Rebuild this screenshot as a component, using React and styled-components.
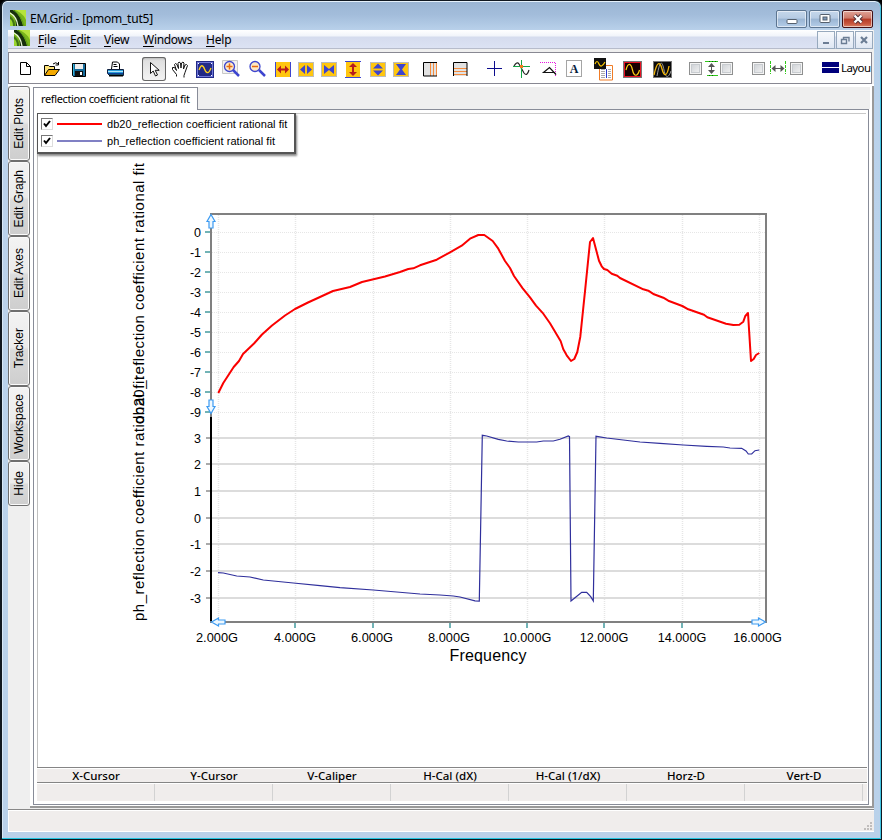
import React from "react";
import styled, { createGlobalStyle } from "styled-components";

const Global = createGlobalStyle`
  * { box-sizing: border-box; }
  html, body { margin: 0; background: #000; }
  body { width: 882px; height: 840px; overflow: hidden; font-family: "Noto Sans", "Open Sans", sans-serif; color: #000; }
  svg { display: block; flex: none; }
`;

const Window = styled.div`
  width: 882px;
  height: 840px;
  display: flex;
  flex-direction: column;
  border: 1px solid #101820;
  border-left-width: 2px;
  border-radius: 7px 7px 0 0;
  background: linear-gradient(#9ab5d3 0, #a3bddb 14px, #bad2eb 30px, #b9d1ea 100%);
  box-shadow: inset 0 1px #e5f1fb, inset -1px 0 #3fc4e2, inset 0 -1px #22c4e0, inset 1px 0 #d8e8f6;
  padding: 0 7px 7px 6px;
`;
const TitleBar = styled.header`
  display: flex;
  height: 29px;
  flex: none;
  padding: 9px 1px 0 2px;
`;
const Title = styled.div`
  flex: 1;
  font-size: 12px;
  line-height: 18px;
  margin-left: 4px;
  letter-spacing: ${(p) => p.$track || 0}px;
`;
const WindowButtons = styled.div`
  display: flex;
  gap: 2px;
`;
const WindowButton = styled.button`
  width: 31px;
  height: 18px;
  padding: 0;
  border: 1px solid ${(p) => (p.$danger ? "#431016" : "#5c7591")};
  border-radius: 2px;
  display: flex;
  align-items: center;
  justify-content: center;
  box-shadow: inset 0 0 0 1px rgba(255, 255, 255, 0.55);
  background: ${(p) =>
    p.$danger
      ? "linear-gradient(#e0a397 0, #cd7868 45%, #b43a26 50%, #c8573f 80%, #d98368 100%)"
      : "linear-gradient(#c5d7eb 0, #b6cbe3 45%, #9ab5d3 50%, #b4cde8 100%)"};
`;
const MenuBar = styled.nav`
  display: flex;
  flex: none;
  height: 19px;
  padding-left: 6px;
  width: 865px;
  background: linear-gradient(#fff 0, #f1f4fa 6px, #d5dcee 7px, #dce2f3 18px, #b7bccb 18px);
`;
const MenuItem = styled.span`
  font-size: 12px;
  line-height: 19px;
  width: ${(p) => p.$w}px;
  margin-left: ${(p) => p.$gap}px;
  letter-spacing: ${(p) => p.$track || 0}px;
  white-space: nowrap;
  u { text-underline-offset: 2px; text-decoration-thickness: 1px; }
`;
const MdiButtons = styled.div`
  display: flex;
  margin-left: auto;
  gap: 1px;
`;
const MdiButton = styled.button`
  width: 18px;
  height: 18px;
  margin-top: 1px;
  padding: 0;
  display: flex;
  align-items: center;
  justify-content: center;
  background: linear-gradient(#f7f9fc, #dfe7f3);
  border: 1px solid #97a9bd;
`;
const Client = styled.div`
  flex: 1;
  min-height: 0;
  display: flex;
  flex-direction: column;
  background: #efefef;
  width: 866px;
`;
const Toolbar = styled.div`
  height: 32px;
  width: 864px;
  flex: none;
  margin-top: 3px;
  border: 1px solid #888892;
  background: #fff;
  display: flex;
  padding-top: 4px;
`;
const Tool = styled.div`
  width: 24px;
  height: 24px;
  flex: none;
  margin-left: ${(p) => p.$gap}px;
  border-radius: 3px;
  background: ${(p) => (p.$active ? "linear-gradient(#dcdcdc,#f4f4f4)" : "none")};
  box-shadow: ${(p) => (p.$active ? "inset 0 0 0 1px #666, inset 0 2px 2px #bbb" : "none")};
`;
const ToolCheck = styled.span`
  width: 13px;
  height: 13px;
  flex: none;
  margin-top: 5px;
  margin-left: ${(p) => p.$gap}px;
  border: 1px solid #8e8f8f;
  background: linear-gradient(135deg, #c9cdd2, #f6f6f6);
  box-shadow: inset 0 0 0 1px #f4f4f4, inset 0 0 0 2px #c8ccd0;
`;
const ToolLabel = styled.span`
  font-size: 11.5px;
  line-height: 22px;
  margin-left: -2px;
  white-space: nowrap;
  letter-spacing: -0.6px;
`;
const Workspace = styled.div`
  flex: 1;
  min-height: 0;
  display: flex;
  border-top: 2px solid #fff;
`;
const SideTabs = styled.div`
  width: 22px;
  flex: none;
`;
const SideTab = styled.button`
  width: 22px;
  height: ${(p) => p.$h}px;
  display: flex;
  align-items: center;
  justify-content: center;
  padding: 0;
  border: 1px solid #6f6f6f;
  border-radius: 3px;
  box-shadow: inset 0 0 0 1px #fafafa;
  background: linear-gradient(#f3f3f3 0, #ebebeb 48%, #dbdbdb 52%, #cecece 100%);
  span {
    font: 12px "Liberation Sans", sans-serif;
    writing-mode: vertical-rl;
    transform: rotate(180deg);
    letter-spacing: ${(p) => p.$track || 0}px;
    white-space: nowrap;
  }
`;
const Document = styled.div`
  width: 844px;
  display: flex;
  flex-direction: column;
  border: solid #999;
  border-width: 0 2px 2px 0;
  background: #fff;
  padding: 1px 2px 1px 3px;
  margin-bottom: 1px;
`;
const TabStrip = styled.div`
  display: flex;
  height: 22px;
  flex: none;
  background: #efefef;
`;
const Tab = styled.div`
  width: 165px;
  height: 23px;
  border: 1px solid #888c98;
  border-bottom: 0;
  background: #fff;
  font-size: 11px;
  line-height: 21px;
  padding-left: 7px;
  letter-spacing: ${(p) => p.$track}px;
  white-space: nowrap;
  z-index: 1;
`;
const Pane = styled.div`
  flex: 1;
  min-height: 0;
  display: flex;
  flex-direction: column;
  width: 836px;
  border: 1px solid #888c98;
  padding: 3px 1px 2px 3px;
`;
const Canvas = styled.div`
  position: relative;
  height: 654px;
  flex: none;
  border-top: 1px solid #c8c8c8;
  border-left: 1px solid #c0c0c0;
  margin-right: 1px;
`;
const Legend = styled.div`
  position: absolute;
  left: -1px;
  top: -1px;
  width: 259px;
  height: 41px;
  padding: 1px 0 0 3px;
  background: #fff;
  border: 1px solid #555;
  border-width: 1px 2px 2px 1px;
  box-shadow: 1px 2px 2px #888;
`;
const LegendRow = styled.div`
  display: flex;
  align-items: center;
  height: 17px;
  font: 11px "Liberation Sans", sans-serif;
  letter-spacing: ${(p) => p.$track}px;
  white-space: nowrap;
`;
const Check = styled.span`
  width: 12px;
  height: 12px;
  border: 1px solid #777;
  border-right-color: #ddd;
  border-bottom-color: #ddd;
  margin-right: 4px;
`;
const Swatch = styled.span`
  width: 45px;
  height: 2px;
  background: ${(p) => p.$color};
  margin-right: 5px;
`;
const ReadoutHead = styled.div`
  height: 16px;
  display: flex;
  flex: none;
  background: #f0edec;
  border-top: 1px solid #858585;
  border-bottom: 1px solid #858585;
  box-shadow: inset 0 1px #fff;
  span {
    width: 118px;
    text-align: center;
    font-size: 11.5px;
    font-weight: 500;
    line-height: 15px;
    letter-spacing: 0;
  }
`;
const ReadoutRow = styled.div`
  height: 18px;
  display: flex;
  flex: none;
  background: #f0edec;
  border-top: 1px solid #fff;
  span { width: 118px; border-right: 1px solid #d2d2d2; }
`;
const StatusBar = styled.footer`
  height: 23px;
  flex: none;
  width: 866px;
  display: flex;
  align-items: flex-end;
  justify-content: flex-end;
  background: #f0edec;
  border-top: 1px solid #888;
  border-bottom: 1px solid #fff;
  box-shadow: inset 0 1px #fff, inset 1px 0 #fff;
`;

const Logo = () => (
  <svg width="16" height="16" viewBox="0 0 16 16">
    <rect width="16" height="16" fill="#79b51b" />
    <path d="M5 0h11v10C14 5 10 2 5 0" fill="#b5e33c" />
    <path d="M4 0c4 4 7 8 9 16H6C6 9 4 5 0 2V0z" fill="#16300d" />
    <path d="M0 3c4 2 7 6 8 13" fill="none" stroke="#e8f7d0" strokeWidth="1.3" />
    <path d="M3 0c5 3 9 8 11 16" fill="none" stroke="#5b9b18" />
    <path d="M0 6c3 2 5 5 5 10H0" fill="#3f7513" />
    <path d="M0 9c2 1 3 4 3 7H0" fill="#9ad52f" />
  </svg>
);

const Gold = ({ children }) => (
  <>
    <rect x="4.5" y="5.5" width="15" height="14" fill="#ffc60f" stroke="#bcbcbc" />
    {children}
  </>
);
const blue = "#3d45cf";
const icons = {
  page: <path d="M6.500 5.500h6l4 4v8h-10zM12.500 5.500v4h4" fill="#fff" stroke="#000" />,
  open: (
    <>
      <path d="M4.500 18.500v-10h4l1 1h5v3" fill="#ffe47a" stroke="#000" />
      <path d="M4.500 18.500l4-6h11l-4.500 6z" fill="#f3a900" stroke="#000" />
      <path d="M13 7q3-2.500 5 0M18.500 5v3h-3" fill="none" stroke="#000" />
    </>
  ),
  save: (
    <>
      <path d="M5.500 6.500h13v13h-12l-1-1z" fill="#166c9c" stroke="#000" />
      <path d="M8 7h8v5H8z" fill="#eee" />
      <path d="M8 14h8v5H8z" fill="#111" />
      <path d="M13 15h2v3h-2z" fill="#fff" />
      <path d="M6.500 7v11" stroke="#37b4d8" />
    </>
  ),
  print: (
    <>
      <path d="M7.500 12l1-7h5l2 2v5" fill="#fff" stroke="#000" />
      <path d="M9.500 7.500h3M9.500 9.500h4" stroke="#000" />
      <path d="M3.500 12.500h16v6h-14l-2-2z" fill="#2a9ed8" stroke="#102040" />
      <path d="M4 14.500h15" stroke="#b5e4f8" />
      <path d="M4 16.500h15" stroke="#0b3f9c" />
      <path d="M5 18.500h14" stroke="#000" strokeWidth="2" />
    </>
  ),
  pointer: <path d="M8.500 5.500v11l2.700-2.500 2.300 5 2-1-2.300-4.700h4z" fill="#fff" stroke="#111" />,
  hand: (
    <path d="M8.500 19.500v-2l-4-5 0-2h2l2 3-2-6 1-1 1.500 1 1.500 4-.5-5 1-1.500 1.500 1 .5 5 .5-5 1.500-1 1 1-.5 6 1.500-4 1.500-.5 1 1-2.500 7-1 3v2" fill="#fff" stroke="#111" />
  ),
  sine: (
    <>
      <rect x="3" y="4" width="18" height="17" fill="#222a86" />
      <rect x="4.500" y="5.500" width="15" height="14" fill="none" stroke="#6f77d9" />
      <path d="M6 13c2-6 4-5 5.500-1s4 6 6.500-1" fill="none" stroke="#ffd21c" strokeWidth="1.300" />
      <path d="M5 6h1v1H5zM18 6h1v1h-1zM5 18h1v1H5zM18 18h1v1h-1z" fill="#fff" />
    </>
  ),
  zoomIn: (
    <>
      <path d="M3.500 3.500h15v13h-15z" fill="#f2f2f2" stroke="#c8c8c8" />
      <path d="M14 13l6 6" stroke={blue} strokeWidth="2.500" />
      <circle cx="10.500" cy="9.500" r="5" fill="#ffe9c4" stroke={blue} strokeWidth="1.300" />
      <path d="M7.500 9.500h6M10.500 6.500v6" stroke="#e66a10" strokeWidth="1.500" />
    </>
  ),
  zoomOut: (
    <>
      <path d="M14 13l6 6" stroke={blue} strokeWidth="2.500" />
      <circle cx="10" cy="9.500" r="5" fill="#ffe9c4" stroke={blue} strokeWidth="1.300" />
      <path d="M7 9.500h6" stroke="#e66a10" strokeWidth="1.500" />
    </>
  ),
  expandX: (
    <>
      <path d="M4 5h16v15H4z" fill="#ffc60f" />
      <path d="M4.500 5v15M19.500 5v15" stroke={blue} />
      <path d="M6 12.500l4-4v3h4v-3l4 4-4 4v-3h-4v3z" fill="#b71c1c" />
    </>
  ),
  outX: <Gold><path d="M11 8v9l-5-4.500zM13 8v9l5-4.500z" fill={blue} /></Gold>,
  inX: <Gold><path d="M7 8v9l5-4 5 4V8l-5 4z" fill={blue} /></Gold>,
  expandY: (
    <>
      <path d="M5 4h14v17H5z" fill="#ffc60f" />
      <path d="M4 4.500h16M4 20.500h16" stroke={blue} />
      <path d="M12 6l4 4h-3v5h3l-4 4-4-4h3v-5H8z" fill="#b71c1c" />
    </>
  ),
  outY: <Gold><path d="M7 11.500h10l-5-5zM7 13.500h10l-5 5z" fill={blue} /></Gold>,
  inY: <Gold><path d="M7 7h10l-4 5.500 4 5.500H7l4-5.500z" fill={blue} /></Gold>,
  gridV: (
    <>
      <path d="M5 6h13v13H5z" fill="#e2e2e2" />
      <path d="M11.500 6v13M14.500 6v13M17.500 6v13" stroke="#f58b3c" />
      <path d="M18 5.500H4.500v13.500H18" fill="none" stroke="#000" />
    </>
  ),
  gridH: (
    <>
      <path d="M5 6h13v13H5z" fill="#e2e2e2" />
      <path d="M5 11.500h13M5 14.500h13M5 17.500h13" stroke="#f58b3c" />
      <path d="M4.500 19V5.500h13.500V19" fill="none" stroke="#000" />
    </>
  ),
  cross: <path d="M4 11.500h15M11.500 4v15" stroke="#0b0b8c" />,
  track: (
    <>
      <path d="M4 9q3-5 5-2l5 9q3 4 5-3" fill="none" stroke="#222" strokeWidth="1.200" />
      <path d="M3 9.500h17M11.500 3v18" stroke="#14a546" />
      <rect x="10" y="8" width="3" height="3" fill="#f07b1b" />
    </>
  ),
  delta: (
    <>
      <path d="M3 5.500h15.500V19" fill="none" stroke="#e815e0" strokeDasharray="1 1" />
      <path d="M6.500 15.500h11l1.500 2-6.500-7z" fill="#fff" stroke="#111" strokeWidth="1.200" />
    </>
  ),
  letter: (
    <>
      <rect x="3.500" y="3.500" width="15" height="16" fill="#fff" stroke="#a5a5a5" />
      <text x="11" y="16" textAnchor="middle" fontFamily="Liberation Serif, serif" fontSize="12" fontWeight="bold" fill="#061b3c">A</text>
    </>
  ),
  report: (
    <>
      <path d="M7.500 8.500h13v14.500h-13z" fill="#fff" stroke="#f07c26" />
      <path d="M9 12.500h4M9 14.500h4M9 16.500h4M9 18.500h4M9 20.500h4M16 12.500h3M16 14.500h3M16 16.500h3M16 18.500h3M16 20.500h3" stroke="#aaa" />
      <path d="M14.500 12v9" stroke="#293bce" />
      <path d="M2 1h12v11H2z" fill="#111" />
      <path d="M3 7q2-5 4 0t6-2" fill="none" stroke="#fc0" strokeWidth="1.200" />
    </>
  ),
  redSine: (
    <>
      <rect x="2.500" y="4.500" width="18" height="16" fill="#160000" stroke="#777" />
      <rect x="3.500" y="5.500" width="16" height="14" fill="none" stroke="#e91123" />
      <path d="M5 13c2-8 5-7 6.500 0s5 7 7 0" fill="none" stroke="#ffcf12" strokeWidth="1.200" />
    </>
  ),
  twoSine: (
    <>
      <rect x="2.500" y="4.500" width="18" height="16" fill="#0a0a0a" stroke="#777" />
      <path d="M6 19c3-16 5-16 7-6s5 7 7 1" fill="none" stroke="#999" />
      <path d="M3 18C6 4 9 4 11 12s5 8 7-3" fill="none" stroke="#f3b60b" strokeWidth="1.300" />
    </>
  ),
  calY: (
    <>
      <path d="M5 4.500h13M7 18.500h11" stroke="#32c71b" />
      <path d="M9 4.500h1m2 0h1m2 0h1M9 18.500h1m2 0h1" stroke="#060" />
      <path d="M11.500 7v9" stroke="#555" />
      <path d="M8 10l3.500-4L15 10zM8 13l3.500 4 3.500-4z" fill="#555" />
    </>
  ),
  calX: (
    <>
      <path d="M4.500 4v13M19.500 4v13" stroke="#32c71b" strokeDasharray="3 1" />
      <path d="M6 11.500h12" stroke="#555" />
      <path d="M9.500 8l-4 3.500 4 3.500zM14.500 8l4 3.500-4 3.500z" fill="#555" />
    </>
  ),
  layout: <path d="M3 5h17v5H3zM3 11h17v5H3z" fill="#00007c" />,
};

const tools = [
  ["page", 5], ["open", 2], ["save", 3], ["print", 13], ["pointer", 14, true], ["hand", 2],
  ["sine", 1], ["zoomIn", 2], ["zoomOut", 2], ["expandX", 2], ["outX", -1], ["inX", -1],
  ["expandY", 0], ["outY", 1], ["inY", -1], ["gridV", 6], ["gridH", 6], ["cross", 10],
  ["track", 3], ["delta", 3], ["letter", 2], ["report", 5], ["redSine", 5], ["twoSine", 6],
];
const ToolIcon = ({ name, gap, active }) => (
  <Tool $gap={gap} $active={active}>
    <svg width="24" height="24" viewBox="0 0 24 24">{icons[name]}</svg>
  </Tool>
);

const red = [
  [218.300, 393], [223.300, 383], [233.700, 367], [239, 361], [243, 354], [254, 343.500], [262, 334.500], [272, 325.500],
  [285, 315.500], [295, 309], [308, 302.500], [320, 297], [333, 291], [350, 287], [362, 282], [385, 276.500], [400, 272],
  [408.300, 269], [413.300, 268.300], [420, 265.300], [436.700, 259.700], [450, 252.300], [461.700, 245.700], [470, 238.700],
  [478.300, 235], [484.300, 235], [492.700, 241], [498.300, 248.700], [505, 261], [510, 268], [514, 276], [522.700, 288.300],
  [530, 297.300], [536, 305.700], [543.300, 313.700], [550, 323.300], [560.700, 341.300], [563.300, 349.300], [566.700, 355.300],
  [571, 361], [574.300, 359], [577.300, 352], [580.300, 336.700], [585.300, 288.300], [590, 242], [593, 238], [599, 260.700],
  [601.700, 266.300], [604, 269], [607.300, 270], [611.700, 273.700], [617.300, 275.700], [620, 278], [643.300, 289.300],
  [648.300, 290.700], [654, 294.300], [663.300, 297.700], [668.300, 300.700], [682.300, 306], [688.300, 309.300], [704, 314.700],
  [707.300, 317.300], [726, 323.700], [733.300, 325], [739.300, 324.700], [743.300, 321.700], [745.300, 316], [748, 313],
  [751, 361], [753.700, 359], [756, 355], [759.300, 353],
];
const phase = [
  [218, 572.700], [223.300, 573], [236.700, 576], [250, 577], [263.300, 580], [293.300, 583], [320, 585.700], [340, 587.700],
  [373.300, 590], [420, 594], [440, 595], [453.300, 596], [460, 597], [475, 600.800], [479.300, 601], [482.300, 435.300],
  [486.700, 436], [498.300, 439.300], [506.700, 441], [518.300, 442], [536.700, 442], [543.300, 441], [553.300, 441],
  [560, 439.300], [568.300, 436], [569.500, 436.700], [571, 601], [575, 597.700], [581.700, 592.300], [586.700, 592.300],
  [590.700, 596.700], [593.300, 601], [596, 436.300], [606.700, 438], [623.300, 440], [640, 442], [660, 443.300],
  [683.300, 445], [706.700, 446.300], [723.300, 447], [730, 448], [741.700, 448.300], [746, 451], [748.300, 454],
  [751.700, 454], [755, 450.700], [759.300, 450],
];
const line = (pts) => pts.map((p) => p.join(",")).join(" ");
const gx = [218.500, 295.500, 373.500, 450.500, 527.500, 604.500, 682.500, 759.500];
const xLabels = [217, 295, 372, 449, 527, 604, 682, 757.500];
const py = [438, 464, 491, 518, 544, 571, 598];

const Chart = () => (
  <svg width="826" height="653" viewBox="38 114 826 653" fontFamily="Liberation Sans, sans-serif">
    {gx.map((x) => (
      <line key={x} x1={x} x2={x} y1="215" y2="621" stroke="#e6e6e6" strokeWidth="1.500" strokeDasharray="1 1" />
    ))}
    {[...Array(10)].map((_, i) => (
      <g key={i}>
        <line x1="212" x2="765" y1={232.500 + i * 20} y2={232.500 + i * 20} stroke="#e6e6e6" strokeDasharray="1 1" />
        <line x1="205" x2="210" y1={232 + i * 20} y2={232 + i * 20} stroke="#71b3b6" strokeWidth="2" />
        <text x="201" y={237 + i * 20} textAnchor="end" fontSize="12.500">{i ? -i : 0}</text>
      </g>
    ))}
    {py.map((y, i) => (
      <g key={y}>
        <line x1="206" x2="765" y1={y} y2={y} stroke="#dcdcdc" strokeWidth="2" />
        <line x1="206" x2="210" y1={y} y2={y} stroke="#aaa" strokeWidth="2" />
        <text x="201" y={y + 4.500} textAnchor="end" fontSize="12.500">{3 - i}</text>
      </g>
    ))}
    <path d="M211 417V214H766V622H210" fill="none" stroke="#808080" strokeWidth="2" />
    <path d="M211 417V621" stroke="#000" strokeWidth="2" />
    {gx.map((x, i) => (
      <g key={x}>
        {i > 0 && i < 7 && <line x1={x - 0.500} x2={x - 0.500} y1="623" y2="628" stroke="#71b3b6" strokeWidth="2" />}
        <text x={xLabels[i]} y="642" textAnchor="middle" fontSize="12.500" textLength={i < 4 ? 42 : 48.500} lengthAdjust="spacingAndGlyphs">{`${2 + i * 2}.000G`}</text>
      </g>
    ))}
    <polyline points={line(phase)} fill="none" stroke="#2f2f9c" strokeWidth="1.200" />
    <polyline points={line(red)} fill="none" stroke="#fa0000" strokeWidth="2" strokeLinejoin="round" />
    <g fill="#eef8ff" stroke="#3d9bf2" strokeWidth="1.200">
      <path d="M211 214.500l4 7h-2v6.500h-4v-6.500h-2z" />
      <path d="M211 413.500l4-7h-2v-6.500h-4v6.500h-2z" />
      <path d="M211.500 622l7-4v2h6.500v4h-6.500v2z" />
      <path d="M765.500 622l-7-4v2h-6.500v4h6.500v2z" />
    </g>
    <text x="488" y="661" textAnchor="middle" fontSize="16" textLength="77">Frequency</text>
    <text transform="translate(143.500 424) rotate(-90)" fontSize="15" textLength="261">db20_reflection coefficient rational fit</text>
    <text transform="translate(143.500 621) rotate(-90)" fontSize="15" textLength="245">ph_reflection coefficient rational fit</text>
  </svg>
);

const Tick = () => (
  <svg width="10" height="10" viewBox="0 0 10 10">
    <path d="M2 4.500l2 2.500 4-5" fill="none" stroke="#000" strokeWidth="2" />
  </svg>
);

export default function App() {
  return (
    <>
      <Global />
      <Window>
        <TitleBar>
          <Logo />
          <Title $track={-0.230}>EM.Grid - [pmom_tut5]</Title>
          <WindowButtons>
            <WindowButton><svg width="12" height="12"><rect x="1" y="6.500" width="10" height="4" rx="1" fill="#fff" stroke="#55606e" /></svg></WindowButton>
            <WindowButton><svg width="12" height="12"><rect x="1" y="1.500" width="10" height="8" rx="1" fill="#fff" stroke="#55606e" /><rect x="4" y="4" width="4" height="3" fill="#7c98b8" stroke="#55606e" /></svg></WindowButton>
            <WindowButton $danger><svg width="12" height="12"><path d="M2.500 2.500l7 7M9.500 2.500l-7 7" stroke="#4d3038" strokeWidth="4.200" /><path d="M2.500 2.500l7 7M9.500 2.500l-7 7" stroke="#fff" strokeWidth="2.300" /></svg></WindowButton>
          </WindowButtons>
        </TitleBar>
        <Client>
          <MenuBar>
            <Logo />
            <MenuItem $gap={8} $w={19} $track={-0.200}><u>F</u>ile</MenuItem>
            <MenuItem $gap={13} $w={20} $track={-0.300}><u>E</u>dit</MenuItem>
            <MenuItem $gap={14} $w={25} $track={-0.300}><u>V</u>iew</MenuItem>
            <MenuItem $gap={14} $w={49} $track={-0.300}><u>W</u>indows</MenuItem>
            <MenuItem $gap={14} $w={26} $track={-0.200}><u>H</u>elp</MenuItem>
            <MdiButtons>
              <MdiButton><svg width="10" height="10"><path d="M2 8h6" stroke="#6b7d94" strokeWidth="2" /></svg></MdiButton>
              <MdiButton><svg width="10" height="10"><path d="M3 2.500h6v4M3.500 2v2M1.500 4.500h5v4h-5z" fill="none" stroke="#6b7d94" strokeWidth="1.400" /></svg></MdiButton>
              <MdiButton><svg width="10" height="10"><path d="M2 2l6 6M8 2l-6 6" stroke="#6b7d94" strokeWidth="2.200" /></svg></MdiButton>
            </MdiButtons>
          </MenuBar>
          <Toolbar>
            {tools.map(([name, gap, active]) => <ToolIcon key={name} name={name} gap={gap} active={active} />)}
            <ToolCheck $gap={14} />
            <ToolIcon name="calY" gap={-2} />
            <ToolCheck $gap={-4} />
            <ToolCheck $gap={19} />
            <ToolIcon name="calX" gap={1} />
            <ToolCheck $gap={0} />
            <ToolIcon name="layout" gap={16} />
            <ToolLabel>Layou</ToolLabel>
          </Toolbar>
          <Workspace>
            <SideTabs>
              <SideTab $h={75}><span>Edit Plots</span></SideTab>
              <SideTab $h={75}><span>Edit Graph</span></SideTab>
              <SideTab $h={75}><span>Edit Axes</span></SideTab>
              <SideTab $h={75}><span>Tracker</span></SideTab>
              <SideTab $h={75}><span>Workspace</span></SideTab>
              <SideTab $h={45}><span>Hide</span></SideTab>
            </SideTabs>
            <Document>
              <TabStrip><Tab $track={-0.370}>reflection coefficient rational fit</Tab></TabStrip>
              <Pane>
                <Canvas>
                  <Chart />
                  <Legend>
                    <LegendRow $track={0.050}><Check><Tick /></Check><Swatch $color="#f00" />db20_reflection coefficient rational fit</LegendRow>
                    <LegendRow $track={0.050}><Check><Tick /></Check><Swatch $color="#8080c4" />ph_reflection coefficient rational fit</LegendRow>
                  </Legend>
                </Canvas>
                <ReadoutHead>
                  {["X-Cursor", "Y-Cursor", "V-Caliper", "H-Cal (dX)", "H-Cal (1/dX)", "Horz-D", "Vert-D"].map((t) => <span key={t}>{t}</span>)}
                </ReadoutHead>
                <ReadoutRow>{[...Array(7)].map((_, i) => <span key={i} />)}</ReadoutRow>
              </Pane>
            </Document>
          </Workspace>
          <StatusBar>
            <svg width="12" height="12"><path d="M8 3h2v2H8zM5 6h2v2H5zM8 6h2v2H8zM2 9h2v2H2zM5 9h2v2H5zM8 9h2v2H8z" fill="#c0bdbc" /></svg>
          </StatusBar>
        </Client>
      </Window>
    </>
  );
}
